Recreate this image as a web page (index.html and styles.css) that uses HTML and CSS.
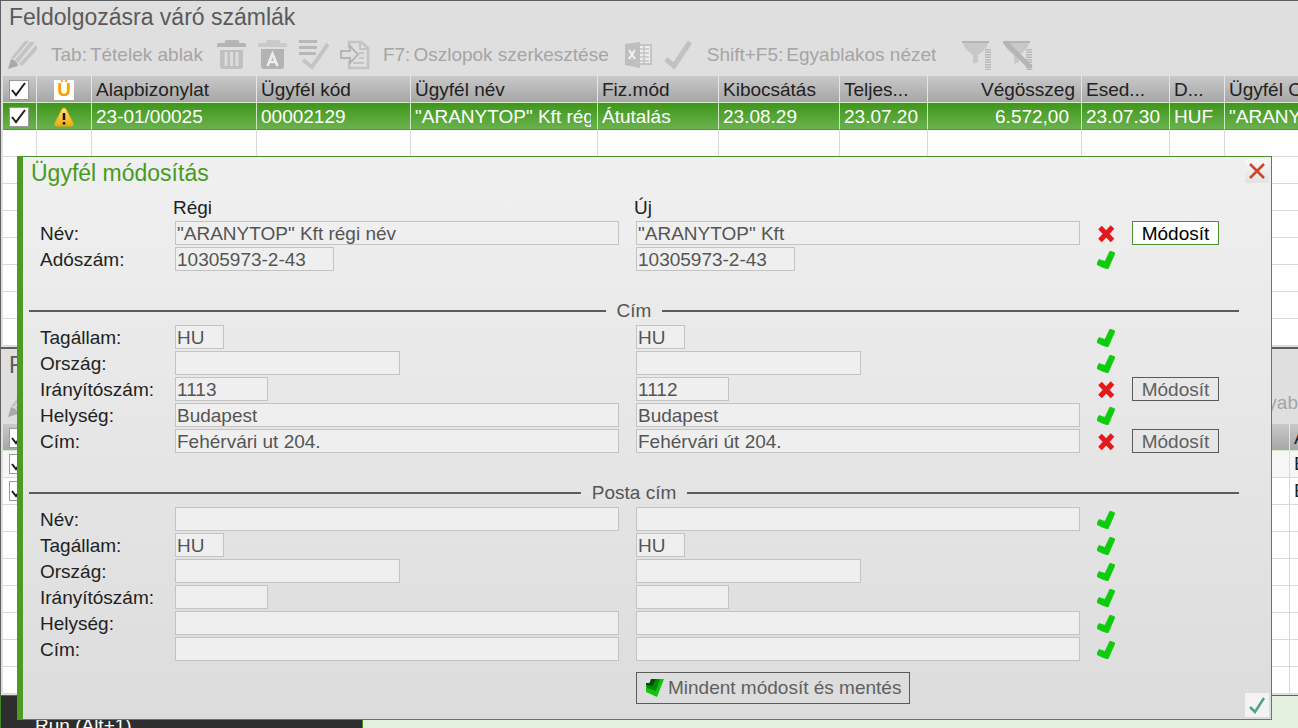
FILE: index.html
```html
<!DOCTYPE html>
<html lang="hu">
<head>
<meta charset="utf-8">
<title>Feldolgozásra váró számlák</title>
<link rel="stylesheet" href="styles.css">
</head>
<body>
<svg class="defs" aria-hidden="true">
  <defs>
    <linearGradient id="gold" x1="0" y1="0" x2="0" y2="1"><stop offset="0" stop-color="#ffe88a"/><stop offset="1" stop-color="#f5a800"/></linearGradient>
    <symbol id="pencil" viewBox="0 0 30 30">
      <path d="M3 18 16 2q2-2 5-1L6 19zM7 20 22 2l5 0L10 23zM11 24 28 5q2 3 0 6L14 26z" fill="#c4c4c4"/>
      <path d="M3 19 0 29l10-3c0-3-3-6-7-7z" fill="#a9a9a9"/>
    </symbol>
    <symbol id="trash" viewBox="0 0 30 30">
      <path d="M0 7V5q0-2 2-2h6V1q0-1 2-1h10q2 0 2 1v2h5q2 0 2 2v2z" fill="#b5b5b5"/>
      <path d="M3 10h23v16q0 3-3 3H6q-3 0-3-3z" fill="#c0c0c0"/>
      <path d="M9 12v14M14.500 12v14M20 12v14" stroke="#dcdcdc" stroke-width="3"/>
    </symbol>
    <symbol id="trash-a" viewBox="0 0 30 30">
      <path d="M0 7V5q0-2 2-2h6V1q0-1 2-1h10q2 0 2 1v2h5q2 0 2 2v2z" fill="#cacaca"/>
      <path d="M3 9h23v17q0 3-3 3H6q-3 0-3-3z" fill="#b3b3b3"/>
      <path d="M9.500 26 14.500 14 19.500 26M11 22h7" fill="none" stroke="#ededed" stroke-width="2.600"/>
    </symbol>
    <symbol id="list-check" viewBox="0 0 30 30">
      <path d="M0 1.500h18M0 7.500h18M0 13.500h17" stroke="#b8b8b8" stroke-width="3"/>
      <path d="m4 20 9 7L29 4" fill="none" stroke="#c4c4c4" stroke-width="4"/>
    </symbol>
    <symbol id="export" viewBox="0 0 30 30">
      <path d="M9 8V2h12l7 6v20H9v-7" fill="none" stroke="#c4c4c4" stroke-width="2.500"/>
      <path d="M20 2v7h7M19 13h5M19 18h5M13 23h11" fill="none" stroke="#c4c4c4" stroke-width="2"/>
      <path d="M1 11h9V6l8 8.500L10 23v-5H1z" fill="#dedede" stroke="#b5b5b5" stroke-width="2"/>
    </symbol>
    <symbol id="excel" viewBox="0 0 30 30">
      <path d="M15 5h13v19H15z" fill="#eee" stroke="#c4c4c4" stroke-width="2"/>
      <path d="M17 9h9M17 13h9M17 17h9M17 21h9M21 6v17" stroke="#c4c4c4" stroke-width="1.500"/>
      <path d="M2 4 17 2v26L2 25z" fill="#bfbfbf"/>
      <path d="m6 10 6 9M12 10l-6 9" stroke="#f3f3f3" stroke-width="2"/>
    </symbol>
    <symbol id="tick" viewBox="0 0 30 30">
      <path d="m2 19 8 7L26 2" fill="none" stroke="#c2c2c2" stroke-width="5"/>
    </symbol>
    <symbol id="funnel" viewBox="0 0 30 30">
      <path d="M1 3h25q-1 6-10 12v7l-5 2v-9Q2 9 1 3z" fill="#c8c8c8"/>
      <path d="M0 2h27" stroke="#b5b5b5" stroke-width="2"/>
      <path d="M26 9v21" stroke="#b9b9b9" stroke-width="6" stroke-dasharray="1.500 1"/>
    </symbol>
    <symbol id="box-tick" viewBox="0 0 20 20">
      <path d="m3 10 4 5L16 3" fill="none" stroke="#1e1e1e" stroke-width="2"/>
    </symbol>
    <symbol id="warn" viewBox="0 0 20 20">
      <path d="M10 1q1 0 2 1l7 14q1 3-2 3H3q-3 0-2-3L8 2q1-1 2-1z" fill="url(#gold)" stroke="#eba91a"/>
      <path d="M10 6v7M10 15v2.500" stroke="#151515" stroke-width="2.500"/>
    </symbol>
    <symbol id="ok" viewBox="0 0 18 18">
      <path d="M0 12.500 2 8.500 8 10.500 13 0 18 2 11 18Q5 16.500 0 13.500z" fill="#0ccc0c" stroke="#0ccc0c" stroke-width=".8"/>
    </symbol>
    <symbol id="bad" viewBox="0 0 18 18">
      <path d="M3 2.500 15.500 15.500M15.500 2 3 15.500" stroke="#e5191c" stroke-width="5"/>
    </symbol>
    <symbol id="save-all" viewBox="0 0 20 20">
      <path d="M1 5 3 6 7 1h12l-7 18L1 14z" fill="#0bc80b"/>
      <path d="M1 5h4l1-4h9l-4 12-9-3z" fill="#088808"/>
      <path d="M1 5h4l1-4h5L7 8 1 7z" fill="#044d04"/>
    </symbol>
  </defs>
</svg>

<main class="panel">
  <h1 class="panel-title">Feldolgozásra váró számlák</h1>
  <div class="toolbar">
    <button class="tool" aria-label="Szerkesztés"><svg><use href="#pencil"/></svg></button>
    <button class="tool tool-text"><span>Tab:</span><span>Tételek ablak</span></button>
    <button class="tool" aria-label="Törlés"><svg><use href="#trash"/></svg></button>
    <button class="tool" aria-label="Összes törlése"><svg><use href="#trash-a"/></svg></button>
    <button class="tool" aria-label="Kijelölés"><svg><use href="#list-check"/></svg></button>
    <button class="tool" aria-label="Átvétel"><svg><use href="#export"/></svg></button>
    <button class="tool tool-text"><span>F7:</span><span>Oszlopok szerkesztése</span></button>
    <button class="tool" aria-label="Excel"><svg><use href="#excel"/></svg></button>
    <button class="tool" aria-label="Rendben"><svg><use href="#tick"/></svg></button>
    <button class="tool tool-text"><span>Shift+F5:</span><span>Egyablakos nézet</span></button>
    <button class="tool tool-filter" aria-label="Szűrő"><svg><use href="#funnel"/></svg></button>
    <button class="tool" aria-label="Szűrő törlése"><svg viewBox="0 0 30 30"><use href="#funnel" width="30" height="30"/><path d="M2 2 28 28" stroke="#b5b5b5" stroke-width="5"/></svg></button>
  </div>
  <table class="grid">
    <colgroup>
      <col class="c-check"><col class="c-flag"><col class="c-doc"><col class="c-code"><col class="c-name"><col class="c-pay"><col class="c-pay"><col class="c-date"><col class="c-code"><col class="c-due"><col class="c-cur"><col>
    </colgroup>
    <thead>
      <tr>
        <th><label class="check"><input type="checkbox" checked aria-label="Összes kijelölése"><svg><use href="#box-tick"/></svg></label></th>
        <th><span class="flag">Ü</span></th>
        <th>Alapbizonylat</th><th>Ügyfél kód</th><th>Ügyfél név</th><th>Fiz.mód</th><th>Kibocsátás</th><th>Teljes...</th><th class="num">Végösszeg</th><th>Esed...</th><th>D...</th><th>Ügyfél C</th>
      </tr>
    </thead>
    <tbody>
      <tr class="selected">
        <td><label class="check"><input type="checkbox" checked aria-label="Sor kijelölése"><svg><use href="#box-tick"/></svg></label></td>
        <td><svg class="warn"><use href="#warn"/></svg></td>
        <td>23-01/00025</td><td>00002129</td><td><span class="clip">"ARANYTOP" Kft rég</span></td><td>Átutalás</td><td>23.08.29</td><td>23.07.20</td><td class="num amount">6.572,00</td><td>23.07.30</td><td>HUF</td><td>"ARANY</td>
      </tr>
      <tr><td></td><td></td><td></td><td></td><td></td><td></td><td></td><td></td><td></td><td></td><td></td><td></td></tr>
      <tr><td colspan="12"></td></tr>
      <tr><td colspan="12"></td></tr>
      <tr><td colspan="12"></td></tr>
      <tr><td colspan="12"></td></tr>
      <tr><td colspan="12"></td></tr>
      <tr><td colspan="12"></td></tr>
      <tr><td colspan="12"></td></tr>
    </tbody>
  </table>
</main>

<section class="panel panel-lower">
  <h2 class="panel-title">F</h2>
  <div class="toolbar">
    <button class="tool" aria-label="Szerkesztés"><svg><use href="#pencil"/></svg></button>
    <button class="tool tool-text tool-end">Egyab</button>
  </div>
  <table class="grid">
    <colgroup><col class="c-check"><col><col class="c-edge"></colgroup>
    <thead>
      <tr><th><label class="check"><input type="checkbox" checked aria-label="Összes tétel"><svg><use href="#box-tick"/></svg></label></th><th></th><th>A</th></tr>
    </thead>
    <tbody>
      <tr class="alt"><td><label class="check"><input type="checkbox" checked aria-label="1. tétel"><svg><use href="#box-tick"/></svg></label></td><td></td><td>E</td></tr>
      <tr><td><label class="check"><input type="checkbox" checked aria-label="2. tétel"><svg><use href="#box-tick"/></svg></label></td><td></td><td>E</td></tr>
      <tr><td></td><td></td><td></td></tr>
      <tr><td></td><td></td><td></td></tr>
      <tr><td></td><td></td><td></td></tr>
      <tr><td></td><td></td><td></td></tr>
      <tr><td></td><td></td><td></td></tr>
      <tr><td></td><td></td><td></td></tr>
      <tr><td></td><td></td><td></td></tr>
    </tbody>
  </table>
</section>

<footer class="status"><div class="run">Run (Alt+1)</div></footer>

<form class="dialog" role="dialog" aria-labelledby="dlg-title">
  <header class="dialog-head">
    <h2 id="dlg-title">Ügyfél módosítás</h2>
    <button type="button" class="corner" aria-label="Bezárás"><svg viewBox="0 0 24 24"><path d="m5 5 14 14M19 5 5 19" stroke="#cf4327" stroke-width="2.500"/></svg></button>
  </header>

  <div class="row"><span></span><span class="col-head">Régi</span><span class="col-head">Új</span></div>
  <div class="row"><label for="n1">Név:</label><input id="n1" readonly value='"ARANYTOP" Kft régi név'><input aria-label="Új név" readonly value='"ARANYTOP" Kft'><svg class="mark"><use href="#bad"/></svg><button type="button" class="btn btn-active">Módosít</button></div>
  <div class="row"><label for="a1">Adószám:</label><input id="a1" class="w-tax" readonly value="10305973-2-43"><input aria-label="Új adószám" class="w-tax" readonly value="10305973-2-43"><svg class="mark"><use href="#ok"/></svg></div>

  <h3 class="divider">Cím</h3>
  <div class="row"><label for="t1">Tagállam:</label><input id="t1" class="w-state" readonly value="HU"><input aria-label="Új tagállam" class="w-state" readonly value="HU"><svg class="mark"><use href="#ok"/></svg></div>
  <div class="row"><label for="o1">Ország:</label><input id="o1" class="w-country" readonly><input aria-label="Új ország" class="w-country" readonly><svg class="mark"><use href="#ok"/></svg></div>
  <div class="row"><label for="i1">Irányítószám:</label><input id="i1" class="w-zip" readonly value="1113"><input aria-label="Új irányítószám" class="w-zip" readonly value="1112"><svg class="mark"><use href="#bad"/></svg><button type="button" class="btn">Módosít</button></div>
  <div class="row"><label for="h1">Helység:</label><input id="h1" readonly value="Budapest"><input aria-label="Új helység" readonly value="Budapest"><svg class="mark"><use href="#ok"/></svg></div>
  <div class="row"><label for="c1">Cím:</label><input id="c1" readonly value="Fehérvári ut 204."><input aria-label="Új cím" readonly value="Fehérvári út 204."><svg class="mark"><use href="#bad"/></svg><button type="button" class="btn">Módosít</button></div>

  <h3 class="divider">Posta cím</h3>
  <div class="row"><label for="n2">Név:</label><input id="n2" readonly><input aria-label="Új posta név" readonly><svg class="mark"><use href="#ok"/></svg></div>
  <div class="row"><label for="t2">Tagállam:</label><input id="t2" class="w-state" readonly value="HU"><input aria-label="Új posta tagállam" class="w-state" readonly value="HU"><svg class="mark"><use href="#ok"/></svg></div>
  <div class="row"><label for="o2">Ország:</label><input id="o2" class="w-country" readonly><input aria-label="Új posta ország" class="w-country" readonly><svg class="mark"><use href="#ok"/></svg></div>
  <div class="row"><label for="i2">Irányítószám:</label><input id="i2" class="w-zip" readonly><input aria-label="Új posta irányítószám" class="w-zip" readonly><svg class="mark"><use href="#ok"/></svg></div>
  <div class="row"><label for="h2">Helység:</label><input id="h2" readonly><input aria-label="Új posta helység" readonly><svg class="mark"><use href="#ok"/></svg></div>
  <div class="row"><label for="c2">Cím:</label><input id="c2" readonly><input aria-label="Új posta cím" readonly><svg class="mark"><use href="#ok"/></svg></div>

  <div class="row actions"><button type="button" class="btn btn-all"><svg><use href="#save-all"/></svg>Mindent módosít és mentés</button></div>
  <button type="button" class="corner corner-ok" aria-label="Rendben"><svg viewBox="0 0 24 24"><path d="m5 14 5 5L19 5" fill="none" stroke="#55a088" stroke-width="2.500"/></svg></button>
</form>
</body>
</html>
```

FILE: styles.css
```css
* { box-sizing: border-box; }

body {
  margin: 0;
  position: relative;
  min-height: 100vh;
  max-height: 100vh;
  overflow: hidden;
  display: flex;
  flex-direction: column;
  font: 19px/24px "Liberation Sans", Arial, sans-serif;
  color: #222;
  background: #e2f0dd;
}

button, input { font: inherit; color: inherit; margin: 0; }
button { padding: 0; border: 0; background: none; }
h1, h2, h3 { margin: 0; font-weight: 400; }
.defs { position: absolute; width: 0; height: 0; }

/* Panels behind the dialog */
.panel {
  flex: none;
  overflow: hidden;
  border-top: 1px solid #606060;
  border-left: 1px solid #606060;
  padding: 0 0 1px 2px;
  background: #dfdfdf;
}
.panel-lower { border-top-width: 2px; border-bottom: 1px solid #606060; }
.panel-title { font-size: 23px; line-height: 33px; padding-left: 6px; color: #5a5a5a; }

.toolbar { display: flex; align-items: center; gap: 11px; height: 42px; padding-left: 5px; color: #a5a5a5; }
.tool { flex: none; display: flex; gap: 3px; }
.tool svg { display: block; width: 30px; height: 30px; }
.tool-text { margin: 0 3px 0 2px; white-space: nowrap; }
.tool-filter { margin-left: 12px; }
.tool-end { margin-left: auto; margin-right: 0; }

.grid { width: 100%; table-layout: fixed; border-collapse: separate; border-spacing: 0; background: #fff; }
.grid th, .grid td {
  height: 27px;
  padding: 0 4px;
  border-right: 1px solid #d9d9d9;
  border-bottom: 1px solid #d9d9d9;
  font-weight: 400;
  text-align: left;
  white-space: nowrap;
  overflow: hidden;
  line-height: 24px;
}
.grid th, .grid .selected td { padding-top: 2px; }
.grid th { background: linear-gradient(#c9c9c9, #a6a6a6); border-right-color: #e6e6e6; border-bottom-color: #d2ecc6; }
.grid tr > :last-child { border-right: 0; }
.grid .selected td { color: #fff; background: linear-gradient(#3f961b, #6ab24d); border-right-color: #cfe6c6; border-bottom-color: #4c9a2c; }
.grid .alt td { background: #f6f6f6; }
.grid .num { text-align: right; padding-right: 6px; }
.grid .amount { padding-right: 12px; }
.clip { display: block; overflow: hidden; margin-right: 2px; }

.c-check { width: 34px; }
.c-flag { width: 55px; }
.c-doc { width: 165px; }
.c-code { width: 154px; }
.c-name { width: 187px; }
.c-pay { width: 121px; }
.c-date { width: 88px; }
.c-due { width: 88px; }
.c-cur { width: 55px; }
.c-edge { width: 8px; }

.check { display: grid; width: 20px; height: 20px; margin-left: 2px; }
.check input { grid-area: 1 / 1; appearance: none; width: 20px; height: 20px; background: #fff; border: 1px solid #999; }
.check svg { grid-area: 1 / 1; width: 20px; height: 20px; }
.flag { display: block; width: 20px; margin: 0 auto; background: #fff; color: #f5a000; font-weight: 700; line-height: 20px; text-align: center; }
.warn { display: block; width: 20px; height: 20px; margin: 0 auto; }

.status { flex: 1 0 32px; }
.run { width: 28%; height: 100%; padding: 18px 0 0 34px; overflow: hidden; color: #fff; background: #2e2e2e; border-left: 1px solid #3f8a22; border-right: 1px solid #3f8a22; }

/* Customer dialog */
.dialog {
  position: absolute;
  top: 156px;
  left: 17px;
  right: 26px;
  border: 1px solid #4b9130;
  border-left: 6px solid #4a9c25;
  background: linear-gradient(#f0f0f0, #dcdcdc);
}
.dialog-head { display: flex; justify-content: space-between; height: 37px; padding: 2px 2px 0 8px; }
.dialog-head h2 { font-size: 23px; line-height: 29px; color: #479b22; }
.corner { width: 24px; height: 24px; background: linear-gradient(#f8f8f8, #e2e2e2); }
.corner svg { display: block; width: 24px; height: 24px; }
.corner-ok { position: absolute; right: 2px; bottom: 2px; background: #f3f3f3; }

.row {
  display: grid;
  grid-template-columns: 118px minmax(0, 1fr) minmax(0, 1fr) 18px 87px;
  column-gap: 17px;
  align-items: center;
  height: 26px;
  padding: 0 52px 0 17px;
}
.row label, .col-head { padding-top: 2px; white-space: nowrap; }
.row input { width: 100%; height: 24px; padding: 2px 1px 0; color: #555; background: #efefef; border: 1px solid #c3c3c3; outline: 0; }
.row .w-tax { width: 159px; }
.row .w-state { width: 49px; }
.row .w-country { width: 225px; }
.row .w-zip { width: 93px; }
.col-head { margin-left: -2px; }
.mark { width: 18px; height: 18px; margin-top: 2px; overflow: visible; }

.btn { height: 24px; padding-top: 2px; line-height: 20px; border: 1px solid #5a5a5a; color: #606060; }
.btn-active { color: #000; background: #fff; border-color: #4b9130; }

.divider { display: flex; align-items: center; gap: 11px; height: 26px; margin: 26px 32px 0 6px; font-size: 19px; color: #555; }
.divider::before, .divider::after { content: ""; flex: 1; height: 2px; background: #5c5c5c; }

.actions { height: 57px; align-items: start; padding-top: 10px; }
.btn-all { grid-column: 3; justify-self: start; display: flex; align-items: center; gap: 3px; height: 32px; padding: 0 8px; white-space: nowrap; }
.btn-all svg { width: 20px; height: 20px; }
```
